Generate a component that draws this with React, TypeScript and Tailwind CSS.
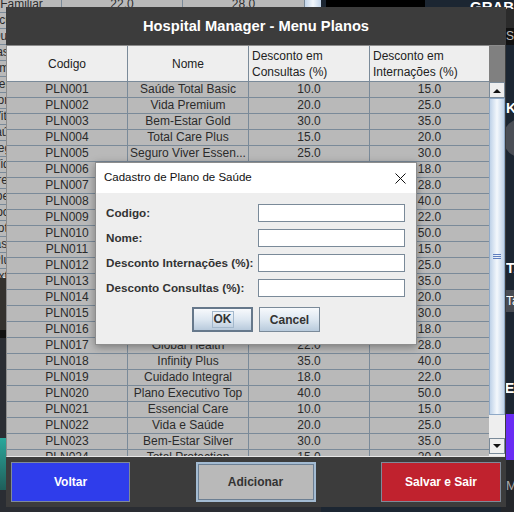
import React from "react";

const plans: [string, string, string, string][] = [
  ["PLN001", "Saúde Total Basic", "10.0", "15.0"],
  ["PLN002", "Vida Premium", "20.0", "25.0"],
  ["PLN003", "Bem-Estar Gold", "30.0", "35.0"],
  ["PLN004", "Total Care Plus", "15.0", "20.0"],
  ["PLN005", "Seguro Viver Essen...", "25.0", "30.0"],
  ["PLN006", "Saúde Familiar", "12.0", "18.0"],
  ["PLN007", "Global Care", "22.0", "28.0"],
  ["PLN008", "Premium Plus", "35.0", "40.0"],
  ["PLN009", "Cuidado Total", "18.0", "22.0"],
  ["PLN010", "Executivo Gold", "40.0", "50.0"],
  ["PLN011", "Essencial Basic", "10.0", "15.0"],
  ["PLN012", "Vida Plena", "20.0", "25.0"],
  ["PLN013", "Bem-Estar Prata", "30.0", "35.0"],
  ["PLN014", "Care Plus", "15.0", "20.0"],
  ["PLN015", "Viver Bem", "25.0", "30.0"],
  ["PLN016", "Saúde Mais", "12.0", "18.0"],
  ["PLN017", "Global Health", "22.0", "28.0"],
  ["PLN018", "Infinity Plus", "35.0", "40.0"],
  ["PLN019", "Cuidado Integral", "18.0", "22.0"],
  ["PLN020", "Plano Executivo Top", "40.0", "50.0"],
  ["PLN021", "Essencial Care", "10.0", "15.0"],
  ["PLN022", "Vida e Saúde", "20.0", "25.0"],
  ["PLN023", "Bem-Estar Silver", "30.0", "35.0"],
  ["PLN024", "Total Protection", "15.0", "20.0"],
];

// rows of the window sitting behind
const behind: [string, string, string][] = [
  ["Plano Familiar", "22.0", "28.0"],
  ["Executivo", "30.0", "40.0"],
  ["Ouro", "25.0", "30.0"],
  ["Master", "35.0", "45.0"],
  ["Premium", "20.0", "25.0"],
  ["Essencial", "10.0", "15.0"],
  ["Bronze", "12.0", "18.0"],
  ["Vital", "18.0", "22.0"],
  ["Saúde", "15.0", "20.0"],
  ["Integral", "28.0", "35.0"],
  ["Vida", "20.0", "25.0"],
  ["Empresarial", "30.0", "35.0"],
  ["Especial", "22.0", "28.0"],
  ["Social", "10.0", "12.0"],
  ["Total", "40.0", "50.0"],
  ["Básico", "5.0", "10.0"],
  ["Plus", "15.0", "20.0"],
  ["Extra", "25.0", "30.0"],
];

function Arrow({ up }: { up?: boolean }) {
  return (
    <svg width="8" height="5" viewBox="0 0 8 5">
      <path d={up ? "M0 5 L4 1 L8 5 Z" : "M0 0 L4 4 L8 0 Z"} fill="#111" />
    </svg>
  );
}

export default function App() {
  return (
    <div className="relative h-[512px] w-[514px] overflow-hidden bg-[#2a2d33] font-['Liberation_Sans',Arial,sans-serif]">
      {/* ─── Window behind (left / top edges) ─── */}
      <div className="absolute left-[-52px] top-[-3px] h-[281px] w-[373px] border-b border-[#e8e8e8] bg-[#b9b9b9]">
        {behind.map((r, i) => (
          <div key={i} className="grid h-[16px] grid-cols-[114px_121px_122px_16px] text-[12px] leading-[15px] text-[#2b2b2b]">
            <div className="whitespace-nowrap border-b border-r border-[#7a8a99] text-center">{r[0]}</div>
            <div className="border-b border-r border-[#7a8a99] text-center">{r[1]}</div>
            <div className="border-b border-r border-[#7a8a99] text-center">{r[2]}</div>
            <div className="bg-linear-to-r from-[#c3d5ea] via-[#f3f7fb] to-[#c3d5ea]" />
          </div>
        ))}
      </div>
      <div className="absolute left-0 top-[278px] h-[52px] w-[6px] bg-[#34322e]" />
      <div className="absolute left-0 top-[330px] h-[8px] w-[6px] bg-[#111]" />
      <div className="absolute left-0 top-[438px] h-[52px] w-[6px] bg-linear-to-b from-[#2aa89c] to-[#1f5e5a]" />

      {/* ─── Right side app behind ─── */}
      <div className="absolute left-[321px] top-0 h-[512px] w-[193px] bg-[#1c2632]">
        <div className="absolute left-[5px] top-0 h-[8px] w-[99px] bg-black" />
        <div className="absolute left-[149px] top-[-1px] text-[15px] font-bold leading-[15px] text-white">GRAB A</div>
        <div className="absolute left-[180px] top-[9px] h-[19px] w-[13px] bg-[#2b2b2b]" />
        <div className="absolute left-[180px] top-[28px] h-[17px] w-[13px] bg-[#111] pl-[5px] text-[12px] leading-[17px] text-[#bbb]">S</div>
        <div className="absolute left-[185px] top-[100px] text-[14px] font-bold leading-[16px] text-white">K</div>
        <div className="absolute left-[182px] top-[118px] h-[40px] w-[40px] rounded-full bg-[#4a4e56]" />
        <div className="absolute left-[185px] top-[260px] text-[14px] font-bold leading-[16px] text-white">TA</div>
        <div className="absolute left-[180px] top-[290px] h-[22px] w-[13px] bg-[#474b53] pl-[5px] text-[12px] leading-[22px] text-white">Ta</div>
        <div className="absolute left-[174px] top-[380px] text-[14px] font-bold leading-[16px] text-white">RE</div>
        <div className="absolute left-[180px] top-[414px] h-[46px] w-[13px] bg-[#6a2cf4]" />
        <div className="absolute left-[180px] top-[460px] h-[52px] w-[13px] bg-[#24262a] pl-[5px] pt-[18px] text-[13px] leading-[16px] text-[#aaa]">Ma</div>
      </div>

      {/* ─── Main window ─── */}
      <div className="absolute left-[6px] top-[7px] flex h-[500px] w-[500px] flex-col bg-[#3c3c3c]">
        <div className="flex h-[38px] items-center justify-center text-[14.7px] font-bold text-white">
          Hospital Manager - Menu Planos
        </div>

        {/* Table scroll pane */}
        <div className="flex h-[412px] w-[499px] border-b border-l border-t border-[#8c8c8c] border-b-[#e6e6e6] bg-[#b9b9b9]">
          <div className="flex w-[482px] flex-col overflow-hidden">
            <div className="grid h-[36px] shrink-0 grid-cols-[121px_121px_121px_119px] text-[12px] leading-[16px] text-[#222]">
              <div className="flex items-center justify-center border-b border-r border-[#7a8a99] bg-[#eeeeee]">Codigo</div>
              <div className="flex items-center justify-center border-b border-r border-[#7a8a99] bg-[#eeeeee]">Nome</div>
              <div className="flex flex-col justify-center border-b border-r border-[#7a8a99] bg-[#eeeeee] pl-[3px]">
                <span>Desconto em</span>
                <span>Consultas (%)</span>
              </div>
              <div className="flex flex-col justify-center border-b border-[#7a8a99] bg-[#eeeeee] pl-[3px]">
                <span>Desconto em</span>
                <span>Internações (%)</span>
              </div>
            </div>
            {plans.map((p) => (
              <div key={p[0]} className="grid h-[16px] shrink-0 grid-cols-[121px_121px_121px_119px] text-[12px] leading-[15px] text-[#2b2b2b]">
                <div className="border-b border-r border-[#7a8a99] text-center">{p[0]}</div>
                <div className="truncate border-b border-r border-[#7a8a99] text-center">{p[1]}</div>
                <div className="border-b border-r border-[#7a8a99] text-center">{p[2]}</div>
                <div className="border-b border-[#7a8a99] text-center">{p[3]}</div>
              </div>
            ))}
          </div>

          {/* Scrollbar */}
          <div className="flex w-[16px] flex-col">
            <div className="h-[36px] bg-[#808080]" />
            <div className="flex h-[16px] items-center justify-center border border-[#7a8a99] bg-[#eeeeee]">
              <Arrow up />
            </div>
            <div className="flex h-[317px] items-center justify-center border border-[#8fa9c7] bg-linear-to-r from-[#bfd2e8] via-[#f4f8fc] to-[#bfd2e8]">
              <div className="flex flex-col gap-[1px]">
                <div className="h-[1px] w-[8px] bg-[#5f7fc0]" />
                <div className="h-[1px] w-[8px] bg-[#5f7fc0]" />
                <div className="h-[1px] w-[8px] bg-[#5f7fc0]" />
              </div>
            </div>
            <div className="flex-1 bg-[#eeeeee]" />
            <div className="flex h-[16px] items-center justify-center border border-[#7a8a99] bg-[#eeeeee]">
              <Arrow />
            </div>
            <div className="h-[2px] bg-[#eeeeee]" />
          </div>
        </div>

        {/* Buttons */}
        <div className="flex flex-1 items-start justify-between px-[5px] pt-[5px] text-[12px] font-bold">
          <button className="h-[40px] w-[119px] border border-[#7f8a99] bg-[#2f3deb] text-white">Voltar</button>
          <button className="h-[40px] w-[120px] border-2 border-[#a3bbd2] bg-[#b9b9b9] text-[#333] shadow-[inset_0_0_0_1px_#6c7f93]">
            Adicionar
          </button>
          <button className="h-[40px] w-[120px] border border-[#7f8a99] bg-[#c0222e] text-white">Salvar e Sair</button>
        </div>
      </div>

      {/* ─── Dialog ─── */}
      <div className="absolute left-[95px] top-[162px] flex h-[183px] w-[322px] flex-col border border-[#8d8d8d] bg-[#eeeeee] shadow-[0_2px_8px_rgba(0,0,0,0.35)]">
        <div className="flex h-[30px] shrink-0 items-center justify-between bg-white pl-[8px] pr-[10px]">
          <span className="text-[11.5px] text-[#111]">Cadastro de Plano de Saúde</span>
          <svg width="11" height="11" viewBox="0 0 11 11">
            <path d="M0.5 0.5 L10.5 10.5 M10.5 0.5 L0.5 10.5" stroke="#111" strokeWidth="1" />
          </svg>
        </div>
        <div className="flex flex-col gap-[7px] pt-[11px] text-[11.7px] font-bold text-[#333]">
          {["Codigo:", "Nome:", "Desconto Internações (%):", "Desconto Consultas (%):"].map((l) => (
            <div key={l} className="flex h-[18px] items-center">
              <span className="w-[162px] whitespace-nowrap pl-[10px]">{l}</span>
              <div className="h-[18px] w-[147px] border border-[#7a8a99] bg-white" />
            </div>
          ))}
          <div className="mt-[3px] flex justify-center gap-[6px] text-[12px]">
            <button className="flex h-[25px] w-[61px] items-center justify-center border-2 border-[#66788b] bg-linear-to-b from-[#f7f9fc] via-[#dde7f1] to-[#b8cadc]">
              <span className="border border-[#a3b8cc] px-[1px] leading-[15px]">OK</span>
            </button>
            <button className="h-[25px] w-[61px] border border-[#7a8a99] bg-linear-to-b from-[#f7f9fc] via-[#dde7f1] to-[#b8cadc]">
              Cancel
            </button>
          </div>
        </div>
      </div>
    </div>
  );
}
